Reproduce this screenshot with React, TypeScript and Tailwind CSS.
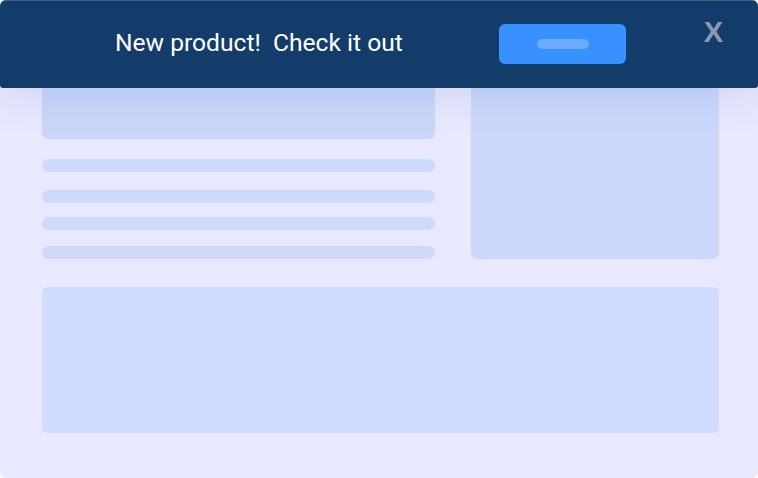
import React from "react";

function Bar({ className }: { className?: string }) {
    return <div className={`h-[13px] w-full rounded-full bg-[#cddafc] ${className ?? ""}`} />;
}

function PromoBanner() {
    return (
        <div className="absolute left-0 right-0 top-0 z-10 h-[88px] rounded-b-[3px] border-t border-[#3f5f86] bg-[#143c6a] shadow-[0_10px_40px_rgba(60,80,170,0.12)]">
            <div className="flex h-full items-start">
                {/* message */}
                <p className="ml-[115px] mt-[27px] whitespace-pre text-[24.6px] leading-[30px] text-white font-['Roboto',sans-serif]">
                    {"New product!  Check it out"}
                </p>
                {/* cta */}
                <button className="ml-auto mt-[23px] flex h-[40px] w-[127px] items-center justify-center rounded-[6px] bg-[#3891fe]">
                    <span className="h-[10px] w-[52px] rounded-full bg-[#6aacff]" />
                </button>
                {/* close */}
                <span className="ml-[77px] mr-[34px] mt-[16px] w-[21px] text-center text-[29px] font-bold leading-[30px] text-[#8a9bb1] font-['Liberation_Sans',sans-serif]">
                    X
                </span>
            </div>
        </div>
    );
}

export default function App() {
    return (
        <div className="relative h-[478px] w-[758px] overflow-hidden rounded-md bg-[#e8e9fe]">
            <PromoBanner />

            <div className="flex flex-col pl-[42px] pr-[39px] pt-[24px]">
                <div className="flex gap-[36px]">
                    {/* LEFT */}
                    <div className="flex w-[393px] flex-col">
                        <div className="h-[115px] rounded-[6px] bg-[#cad7f9]" />
                        <Bar className="mt-[20px]" />
                        <Bar className="mt-[18px]" />
                        <Bar className="mt-[14px]" />
                        <Bar className="mt-[16px]" />
                    </div>
                    {/* RIGHT */}
                    <div className="h-[235px] flex-1 rounded-[6px] bg-[#cbd8fb]" />
                </div>

                {/* bottom panel */}
                <div className="mt-[28px] h-[146px] rounded-[6px] bg-[#cfdcfd]" />
            </div>
        </div>
    );
}
